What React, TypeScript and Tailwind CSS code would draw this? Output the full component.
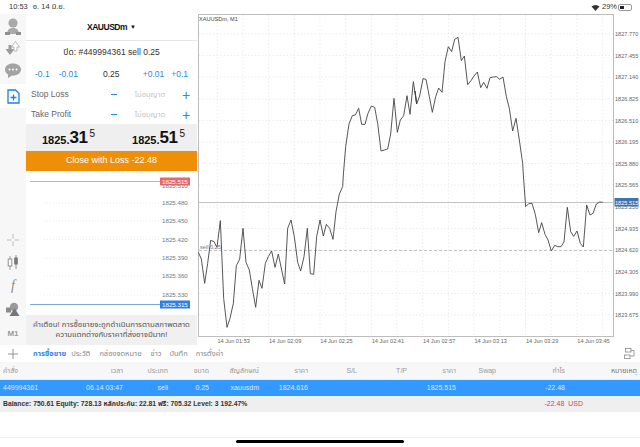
const FONT = "font-['Liberation_Sans','Noto_Sans_Thai','DejaVu_Sans',sans-serif]";

// chart line traced from the reference, segments in page coordinates
const seg = (ox: number, oy: number, pts: number[][]) => pts.map(([x, y]) => [x / 3 + ox, y / 3 + oy]);
const LINE = [
  ...seg(195, 175, [[10,232],[19,252],[29,325],[38,265],[47,196],[57,200],[66,217],[76,137],[86,370],[96,457],[105,430],[115,385],[124,272],[134,252],[144,160],[153,262],[163,285],[172,340],[182,397],[192,316],[201,340],[211,265],[220,245],[230,228],[240,277],[250,237],[260,285],[269,327],[278,160],[288,135],[298,185],[308,262],[317,288],[327,245],[337,160],[346,296],[356,298],[365,185],[375,135],[385,183],[394,148],[404,160],[414,193],[423,110],[433,57],[443,35]]),
  ...seg(195, 0, [[445,525],[452,440],[462,372],[472,347],[481,345],[491,325],[500,373],[510,373],[519,340],[529,318],[539,322],[548,370],[558,453],[568,450],[578,447],[587,402],[597,295],[607,397],[616,360],[626,347],[636,287],[645,343],[655,245],[665,312]]),
  ...seg(415, 0, [[0,273],[5,312],[14,288],[24,236],[33,238],[43,290],[52,337],[62,290],[71,264],[81,277],[90,185],[100,140],[110,155],[119,118],[129,112],[139,182],[148,168],[158,254],[168,242],[177,228],[187,216],[197,263],[206,247],[216,265],[225,233],[235,231],[245,230],[254,238],[264,231],[274,290],[283,325],[293,393],[303,355],[313,420],[323,490]]),
  ...seg(415, 175, [[325,0],[332,95],[341,86],[351,85],[361,118],[371,173],[380,143],[390,178],[399,195],[409,228],[419,211],[428,215],[438,215],[447,201],[457,97],[467,170],[476,184],[486,168],[496,205],[505,216],[515,90],[525,120],[534,115],[544,87],[554,81],[563,82]]),
];

const PRICES = [
  ["1827.770", 34], ["1827.455", 55.5], ["1827.140", 77], ["1826.825", 99], ["1826.510", 120.5], ["1826.195", 142],
  ["1825.880", 163.5], ["1825.565", 185], ["1825.250", 207], ["1824.935", 228.5], ["1824.620", 250], ["1824.305", 271.7],
  ["1823.990", 293.5], ["1823.675", 315],
] as const;
const TIMES = ["01:53", "02:09", "02:25", "02:41", "02:57", "03:13", "03:29", "03:45"];
const VGRID = [217.3, 243, 268.6, 294.3, 320, 345.7, 371.4, 397, 422.7, 448.4, 474, 499.8, 525.5, 551.2, 577, 602.7];
const MINI = [["1825.480", 204], ["1825.450", 222], ["1825.420", 240.5], ["1825.390", 259], ["1825.360", 277], ["1825.330", 296]] as const;

const COLS = "grid grid-cols-[72px_51px_45px_41px_50px_49px_49px_50px_49px_40px_69px_72px] text-right pr-[3px]";
const HEAD = ["คำสั่ง", "เวลา", "ประเภท", "ขนาด", "สัญลักษณ์", "ราคา", "S/L", "T/P", "ราคา", "Swap", "กำไร", "หมายเหตุ"];
const ROW = ["449994361", "06.14 03:47", "sell", "0.25", "xauusdm", "1824.616", "", "", "1825.515", "", "-22.48", ""];

function MainChart() {
  return (
    <svg viewBox="198 14 442 331" className="w-[442px] h-[331px] shrink-0">
      <rect x="198" y="14" width="442" height="331" fill="#fff" />
      {VGRID.map((x) => <line key={x} x1={x} x2={x} y1="15" y2="336" stroke="#e4e4e4" strokeWidth="0.7" strokeDasharray="1.5 2" />)}
      {PRICES.map(([, y]) => <line key={y} x1="199" x2="614" y1={y} y2={y} stroke="#e4e4e4" strokeWidth="0.7" strokeDasharray="1.5 2" />)}
      <rect x="198.5" y="14.5" width="415" height="322" fill="none" stroke="#bdbdbd" />
      <line x1="199" x2="614" y1="202.5" y2="202.5" stroke="#c4c4c4" />
      <line x1="199" x2="614" y1="250.5" y2="250.5" stroke="#aaa" strokeWidth="0.7" strokeDasharray="3 2" />
      <polyline points={LINE.map((p) => p.join(",")).join(" ")} fill="none" stroke="#444" strokeWidth="0.9" strokeLinejoin="round" />
      <g fill="#666" fontSize="5.6">
        <text x="199" y="20.500" fill="#444">XAUUSDm, M1</text>
        <text x="200" y="249" fill="#777">sell 0.25</text>
        {PRICES.map(([p, y]) => <text key={p} x="615" y={y + 2}>{p}</text>)}
        {TIMES.map((t, i) => <text key={t} x={217.5 + i * 51.4} y="342.5">14 Jun {t}</text>)}
      </g>
      <rect x="614.5" y="198" width="24" height="8.500" fill="#3f74ad" />
      <text x="615" y="204.500" fill="#fff" fontSize="5.6">1825.515</text>
    </svg>
  );
}

function MiniChart() {
  return (
    <svg viewBox="27 172 170 144" className="w-[170px] h-[144px]">
      {MINI.map(([, y]) => <line key={y} x1="45" x2="161" y1={y} y2={y} stroke="#e5e5e5" strokeWidth="0.7" strokeDasharray="1 2" />)}
      <g fill="#777" fontSize="6.2">
        <text x="163" y="188.5">1825.510</text>
        {MINI.map(([p, y]) => <text key={p} x="163" y={y + 2.2}>{p}</text>)}
      </g>
      <line x1="31" x2="161" y1="182.5" y2="182.5" stroke="#e6a3a3" />
      <rect x="161" y="178.5" width="30" height="8" fill="#e26a6a" />
      <text x="163" y="184.8" fill="#fff" fontSize="6.2">1825.515</text>
      <line x1="31" x2="161" y1="305.5" y2="305.5" stroke="#7fa8d8" />
      <rect x="161" y="301.5" width="30" height="8" fill="#2f7fe0" />
      <text x="163" y="307.8" fill="#fff" fontSize="6.2">1825.315</text>
    </svg>
  );
}

function Sidebar() {
  return (
    <div className="w-[26px] h-full flex flex-col items-center justify-between pt-[3px] pb-[6px] bg-[#f7f7f7]">
      <div className="flex flex-col items-center">
        <svg width="18" height="20" viewBox="0 0 18 20" className="mb-[3px]">
          <circle cx="9" cy="6" r="4.6" fill="#a9a9a9" />
          <path d="M3 17c0-4 2.500-6 6-6s6 2 6 6z" fill="#a9a9a9" />
          <rect x="1" y="15" width="5" height="3" fill="#8f8f8f" />
          <rect x="12" y="15" width="5" height="3" fill="#8f8f8f" />
        </svg>
        <svg width="18" height="18" viewBox="0 0 18 18" className="mb-[4px]">
          <path d="M1.500 9h3V5h3v4h3l-4.500 6z" fill="#9b9b9b" />
          <path d="M7.500 7l4-5.500 4 5.500h-2.500v4h-3V7z" fill="#fff" stroke="#a9a9a9" strokeWidth="0.8" />
        </svg>
        <svg width="18" height="17" viewBox="0 0 18 17" className="mb-[5px]">
          <path d="M9 1.500c4.500 0 8 2.600 8 6s-3.500 6-8 6l-1-.1L4 16v-3.600C2 11.300 1 9.500 1 7.500c0-3.400 3.500-6 8-6z" fill="#a3a3a3" />
          <circle cx="5.500" cy="7.500" r="1" fill="#fff" /><circle cx="9" cy="7.500" r="1" fill="#fff" /><circle cx="12.500" cy="7.500" r="1" fill="#fff" />
        </svg>
        <div className="w-[26px] h-[24px] bg-white flex items-center justify-center">
          <svg width="13" height="15" viewBox="0 0 13 15" fill="none" stroke="#1f7fe6" strokeWidth="1.300">
            <path d="M1 1h7.500L12 4.500V14H1z" />
            <path d="M6.500 5.500v6M3.500 8.500h6" />
          </svg>
        </div>
      </div>
      <div className="flex flex-col items-center">
        <svg width="14" height="14" viewBox="0 0 14 14" stroke="#b5b5b5" strokeWidth="0.9" className="mb-[8px]">
          <path d="M7 1v4.500M7 8.500V13M1 7h4.500M8.500 7H13" />
        </svg>
        <svg width="14" height="16" viewBox="0 0 14 16" className="mb-[6px]">
          <path d="M4 1v14" stroke="#888" strokeWidth="0.8" />
          <rect x="2.200" y="4" width="3.600" height="7" fill="#fff" stroke="#888" strokeWidth="0.9" />
          <path d="M10 0v14" stroke="#777" strokeWidth="0.8" />
          <rect x="8.200" y="2.500" width="3.600" height="7" fill="#777" />
        </svg>
        <span className="font-['Liberation_Serif',serif] italic text-[14px] leading-[18px] mb-[7px] text-[#8a8a8a]">f</span>
        <svg width="16" height="15" viewBox="0 0 16 15" className="mb-[12px]">
          <circle cx="9" cy="5" r="4.200" fill="#9a9a9a" />
          <rect x="1" y="5.500" width="5" height="5" fill="#8a8a8a" />
          <path d="M9.500 6l5 8h-10z" fill="#777" />
        </svg>
        <span className="text-[8px] leading-[10px] font-bold text-[#9a9a9a]">M1</span>
      </div>
    </div>
  );
}

function LevelRow({ label, className }: { label: string; className: string }) {
  return (
    <div className={`h-[21px] shrink-0 grid grid-cols-[78px_10px_1fr_10px] items-center pl-[5px] pr-[6px] text-[8.5px] text-[#666] ${className}`}>
      <span>{label}</span>
      <div className="w-[6px] h-[1.5px] bg-[#2f86e8] justify-self-center" />
      <span className="text-center text-[7.5px] text-[#c4c4c4]">ไม่อนุญาต</span>
      <span className="text-center text-[14px] leading-none text-[#2f86e8]">+</span>
    </div>
  );
}

function TradePanel() {
  return (
    <div className="w-[171px] h-full flex flex-col bg-white text-[#444]">
      <div className="h-[27px] shrink-0 flex items-center justify-center gap-[3px] border-b border-[#e6e6e6] text-[#111]">
        <span className="text-[8.5px] font-bold tracking-[-0.5px]">XAUUSDm</span>
        <span className="text-[6px]">▼</span>
      </div>
      <div className="h-[20px] shrink-0 flex items-center justify-center pt-[3px] text-[8.5px] text-[#333]">ปิด: #449994361 sell 0.25</div>
      <div className="h-[21px] shrink-0 flex items-center pl-[9px] pr-[9px] pt-[6px] text-[8.5px] text-[#2f86e8]">
        <span>-0.1</span>
        <span className="ml-[9px]">-0.01</span>
        <span className="ml-[25px] text-[#333]">0.25</span>
        <span className="ml-auto">+0.01</span>
        <span className="ml-[7px]">+0.1</span>
      </div>
      <LevelRow label="Stop Loss" className="pt-[4px]" />
      <LevelRow label="Take Profit" className="pt-[2px]" />
      <div className="h-[27px] shrink-0 flex items-center bg-[#efefef] text-[#111] font-bold pl-[16px]">
        {["31", "51"].map((v, i) => (
          <div key={v} className={`flex items-start ${i ? "ml-[37px]" : ""}`}>
            <span className="text-[11px] leading-none mt-[6px]">1825.</span>
            <span className="text-[17px] leading-none tracking-[-0.5px]">{v}</span>
            <span className="text-[10px] leading-none ml-[2px] font-normal">5</span>
          </div>
        ))}
      </div>
      <div className="h-[20px] shrink-0 flex items-center justify-center bg-[#ee8f07] text-white text-[9px]">Close with Loss -22.48</div>
      <div className="h-[144px] shrink-0"><MiniChart /></div>
      <div className="flex-1 bg-[#f0f0f0] flex flex-col items-center justify-center text-[7.8px] leading-[10.5px] text-[#555]">
        <span>คำเตือน! การซื้อขายจะถูกดำเนินการตามสภาพตลาด</span>
        <span>ความแตกต่างกับราคาที่ส่งอาจมีมาก!</span>
      </div>
    </div>
  );
}

export default function App() {
  return (
    <div className={`w-[640px] h-[447px] overflow-hidden bg-white flex flex-col ${FONT}`}>
      <div className="h-[14px] shrink-0 flex items-center pl-[9px] pr-[8px] text-[7.5px] text-[#333]">
        <span>10:53</span>
        <span className="ml-[5px]">อ. 14 มิ.ย.</span>
        <svg width="9" height="7" viewBox="0 0 9 7" className="ml-auto mr-[2px]">
          <path d="M0.500 2.500a6 6 0 0 1 8 0L4.500 7z" fill="#333" />
        </svg>
        <span>29%</span>
        <div className="ml-[1px] w-[14px] h-[7px] border border-[#999] rounded-[2px] p-[1px]">
          <div className="w-[4px] h-full bg-[#222]" />
        </div>
      </div>
      <div className="h-[331px] shrink-0 flex">
        <Sidebar />
        <TradePanel />
        <div className="w-[1px] shrink-0 bg-white" />
        <MainChart />
      </div>
      <div className="h-[17px] shrink-0 flex items-center text-[7.5px] text-[#888] pr-[5px]">
        <svg width="12" height="12" viewBox="0 0 12 12" className="ml-[7px] mr-[14px]" stroke="#888" strokeWidth="0.9">
          <path d="M6 1v10M1 6h10" />
        </svg>
        <span className="text-[#2f86e8] font-bold">การซื้อขาย</span>
        <span className="ml-[5px]">ประวัติ</span>
        <span className="ml-[9px]">กล่องจดหมาย</span>
        <span className="ml-[9px]">ข่าว</span>
        <span className="ml-[8px]">บันทึก</span>
        <span className="ml-[8px]">การตั้งค่า</span>
        <svg width="11" height="11" viewBox="0 0 11 11" fill="none" stroke="#888" strokeWidth="0.8" className="ml-auto">
          <rect x="1.500" y="0.500" width="5.500" height="3.500" />
          <rect x="0.500" y="7" width="5.500" height="3.500" />
          <path d="M7 2.500h3V8H6" />
        </svg>
      </div>
      <div className={`${COLS} h-[18px] shrink-0 items-center pt-[1px] bg-[#f7f7f7] text-[7px] text-[#999] border-b border-[#eee]`}>
        {HEAD.map((h, i) => <span key={i} className={i === 0 ? "text-left pl-[3px]" : i === 11 ? "text-[#777]" : ""}>{h}</span>)}
      </div>
      <div className={`${COLS} h-[16px] shrink-0 items-center bg-[#3399ff] text-[7px] text-[#dbeaff]`}>
        {ROW.map((c, i) => <span key={i} className={i === 0 ? "text-left pl-[3px]" : ""}>{c}</span>)}
      </div>
      <div className="h-[1px] shrink-0 bg-[#e8f2fb]" />
      <div className="h-[15px] shrink-0 flex items-center bg-[#efefef] pl-[3px] text-[6.8px] font-bold text-[#333]">
        <span>Balance: 750.61 Equity: 728.13 หลักประกัน: 22.81 ฟรี: 705.32 Level: 3 192.47%</span>
        <span className="ml-auto mr-[57px] text-[7px] font-normal text-[#d64545]">-22.48&nbsp;&nbsp;USD</span>
      </div>
      <div className="flex-1 flex flex-col">
        <div className="h-[26px] shrink-0 border-b border-[#f0f0f0]" />
        <div className="flex justify-center pt-[2px]">
          <div className="w-[168px] h-[3px] rounded-full bg-black" />
        </div>
      </div>
    </div>
  );
}
